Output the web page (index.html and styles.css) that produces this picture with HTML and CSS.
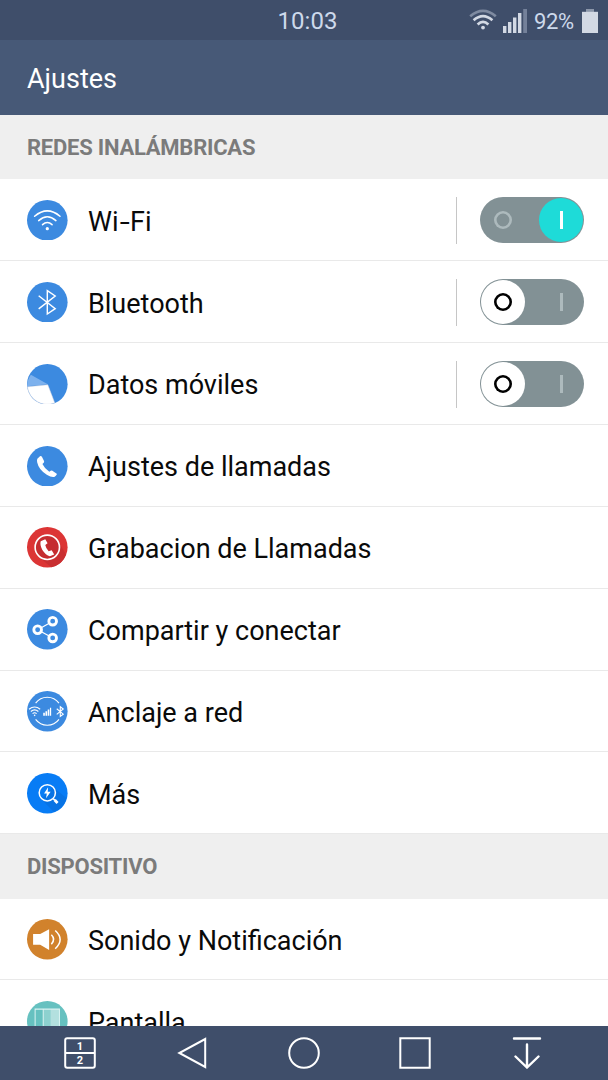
FILE: index.html
```html
<!DOCTYPE html>
<html lang="es">
<head>
    <meta charset="UTF-8">
    <meta name="viewport" content="width=device-width, initial-scale=1.0">
    <title>Ajustes</title>
    <link rel="stylesheet" href="styles.css">
</head>
<body>
    <div class="phone">
        <header class="status-bar">
            <span></span>
            <span class="clock">10:03</span>
            <div class="status-icons">
                <svg class="status-wifi" viewBox="0 0 28 21" fill="none" stroke="#d3d9e4" stroke-width="2.7">
                    <path d="M1.2 7.2Q14 -3.6 26.8 7.2" stroke="#7f8ba1" />
                    <path d="M4.6 11.3Q14 3 23.4 11.3M8.6 15.4Q14 10.4 19.4 15.4" />
                    <circle cx="14" cy="18.6" r="1.9" fill="#d3d9e4" stroke="none" />
                </svg>
                <svg class="status-signal" viewBox="0 0 24 24" fill="#d3d9e4">
                    <path d="M0 17h3.4v7H0zM5 13h3.4v11H5zM10 8.5h3.4v15.5H10zM15 4h3.4v20H15z" />
                    <path d="M20.2 0H24v24h-3.8z" fill="#74819a" />
                </svg>
                <span class="battery-text">92%</span>
                <svg class="status-battery" viewBox="0 0 16 24">
                    <path d="M4 0h8v3H4z" fill="#8c97aa" />
                    <path d="M0 2.8h16V24H0z" fill="#d3d9e4" />
                </svg>
            </div>
        </header>
        <h1 class="title-bar">Ajustes</h1>

        <main class="settings">
            <h2 class="section-title">REDES INALÁMBRICAS</h2>
            <div class="row">
                <svg class="icon" viewBox="0 0 40 40" fill="none" stroke="#fff" stroke-width="1.5" stroke-linecap="round">
                    <circle cx="20" cy="20" r="20" fill="#3c8ae0" stroke="none" />
                    <path d="M7.500 16Q20 5.500 32.500 16M11.500 20.300Q20 12.700 28.500 20.300M15.300 24.300Q20 20 24.700 24.300" />
                    <circle cx="20" cy="28.3" r="1.6" fill="#fff" stroke="none" />
                </svg>
                <span class="label">Wi<span class="wide-hyphen">-</span>Fi</span>
                <span class="switch on"><i class="mark-off"></i><i class="mark-on"></i></span>
            </div>
            <div class="row">
                <svg class="icon" viewBox="0 0 40 40" fill="none" stroke="#fff" stroke-width="1.4">
                    <circle cx="20" cy="20" r="20" fill="#3c8ae0" stroke="none" />
                    <path d="M11.5 13.5L27.8 26.3L20 31.5V8.5L27.8 13.8L11.5 26.5" />
                </svg>
                <span class="label">Bluetooth</span>
                <span class="switch"><i class="mark-off"></i><i class="mark-on"></i></span>
            </div>
            <div class="row">
                <svg class="icon" viewBox="0 0 40 40">
                    <circle cx="20" cy="20" r="20" fill="#3c8ae0" />
                    <path d="M20.5 20L0 22A20 20 0 0 1 3.8 10.5Z" fill="#7db1ed" />
                    <path d="M20.5 20.5L.4 22.5A19.7 19.7 0 0 0 27.3 38.3Z" fill="#fff" stroke="#d6d8e4" stroke-width=".5" />
                </svg>
                <span class="label">Datos móviles</span>
                <span class="switch"><i class="mark-off"></i><i class="mark-on"></i></span>
            </div>
            <div class="row">
                <svg class="icon" viewBox="0 0 40 40">
                    <circle cx="20" cy="20" r="20" fill="#3c8ae0" />
                    <path d="M10.2 12.5L12.800 10Q14 9.500 14.700 10.700L16.900 15Q17.300 16 15.200 17.800Q17.200 22.300 22 25.300Q24 23.800 25 24.300L29.300 27.300Q30 28 27.300 30.200Q24.500 31.200 19.500 28.300Q11.500 23.300 10 16Q9.600 13.500 10.200 12.500Z" fill="#fff" />
                </svg>
                <span class="label">Ajustes de llamadas</span>
            </div>
            <div class="row">
                <svg class="icon" viewBox="0 0 40 40">
                    <circle cx="20" cy="20" r="20" fill="#dc3535" />
                    <path d="M11 29L29 11L38.5 27A20 20 0 0 1 24 39.6Z" fill="#c92f31" />
                    <circle cx="20" cy="20" r="12" fill="#c52d30" stroke="#fff" stroke-width="1.6" />
                    <path d="M13.5 14L18 12L20.3 16L18 17.800Q18.800 21.500 21.300 24L24.300 22.800L26.800 27L22.500 28.800Q18.500 28 15 22.500Q12.500 17.500 13.500 14Z" fill="#fff" />
                </svg>
                <span class="label">Grabacion de Llamadas</span>
            </div>
            <div class="row">
                <svg class="icon" viewBox="0 0 40 40" fill="none" stroke="#fff">
                    <circle cx="20" cy="20" r="20" fill="#3c8ae0" stroke="none" />
                    <path d="M25.5 12L10.5 20.5L25.5 28.5" stroke-width="1.2" />
                    <g fill="#3c8ae0" stroke-width="2.8">
                        <circle cx="25.3" cy="12" r="3.8" />
                        <circle cx="10.5" cy="20.5" r="3.8" />
                        <circle cx="25.3" cy="28.5" r="3.8" />
                    </g>
                </svg>
                <span class="label">Compartir y conectar</span>
            </div>
            <div class="row">
                <svg class="icon" viewBox="0 0 40 40" fill="none" stroke="#fff" stroke-width="1.1">
                    <circle cx="20" cy="20" r="20" fill="#3c8ae0" stroke="none" />
                    <path d="M8.500 12A14.300 14.300 0 0 1 31.500 12M8.500 28A14.300 14.300 0 0 0 31.500 28" />
                    <path d="M2 18Q7.500 13.500 13 18M3.800 20.200Q7.500 17 11.200 20.200M5.500 22.300Q7.500 20.500 9.500 22.300" />
                    <circle cx="7.5" cy="24" r=".8" fill="#fff" stroke="none" />
                    <path d="M16 21.500h1.600v3H16zM18.200 20h1.600v4.500h-1.600zM20.400 18.300H22v6.200h-1.600zM22.600 16.500h1.200v8h-1.200z" fill="#fff" stroke="none" />
                    <path d="M29.300 17.500L35.700 22.800L32.800 25V15.500L35.700 17.700L29.300 23" />
                </svg>
                <span class="label">Anclaje a red</span>
            </div>
            <div class="row">
                <svg class="icon" viewBox="0 0 40 40" fill="none" stroke="#fff">
                    <circle cx="20" cy="20" r="20" fill="#087cf5" stroke="none" />
                    <path d="M14 25.500L26 14L39 25A20 20 0 0 1 26.500 38.500Z" fill="#0873e4" stroke="none" />
                    <circle cx="20" cy="19.5" r="8" stroke-width="1.5" />
                    <path d="M26 25.500l1.500 1.500" stroke-width="1.5" />
                    <path d="M27.300 26.700l2.800 2.900" stroke-width="2.8" />
                    <path d="M20.800 14L16.800 20.300H19.500L18.800 25L23.300 18.500H20.400Z" fill="#fff" stroke="none" />
                </svg>
                <span class="label">Más</span>
            </div>

            <h2 class="section-title">DISPOSITIVO</h2>
            <div class="row">
                <svg class="icon" viewBox="0 0 40 40" fill="none" stroke="#fff" stroke-width="1.5">
                    <circle cx="20" cy="20" r="20" fill="#d1822c" stroke="none" />
                    <path d="M6 14.700H13L21.800 10V30.500L13 25.300H6Z" fill="#fff" stroke="none" />
                    <path d="M24 15.500Q28.500 20 24 24.800M27.800 11.300Q37.500 20 27.800 29.300" />
                </svg>
                <span class="label">Sonido y Notificación</span>
            </div>
            <div class="row">
                <svg class="icon" viewBox="0 0 40 40">
                    <circle cx="20" cy="20" r="20" fill="#66c1c0" />
                    <path d="M16 8h7v24h-7z" fill="#8dd1cf" />
                    <path d="M23 8h9v24h-9z" fill="#b3e0df" />
                    <path d="M8 8h24v24H8zM16 8v24" fill="none" stroke="#d9f2f1" stroke-width="1" />
                </svg>
                <span class="label">Pantalla</span>
            </div>
        </main>

        <nav class="nav-bar">
            <svg viewBox="0 0 32 32" fill="none" stroke="#fff" stroke-width="2">
                <rect x="1.2" y="1.2" width="29.6" height="29.6" rx="2" />
                <path d="M1 16h30" />
                <g class="sim-number" fill="#fff" stroke="none" text-anchor="middle">
                    <text x="16" y="12.8">1</text>
                    <text x="16" y="27.3">2</text>
                </g>
            </svg>
            <svg viewBox="0 0 32 32" fill="none" stroke="#fff" stroke-width="2">
                <path d="M29.200 2V30L3.300 16Z" />
            </svg>
            <svg viewBox="0 0 32 32" fill="none" stroke="#fff" stroke-width="2">
                <circle cx="16" cy="16" r="14.8" />
            </svg>
            <svg viewBox="0 0 32 32" fill="none" stroke="#fff" stroke-width="2">
                <path d="M1.300 1.300h29.400v29.400H1.300z" />
            </svg>
            <svg viewBox="0 0 32 32" fill="none" stroke="#fff" stroke-width="2.4" stroke-linecap="round">
                <path d="M3 1.500H29M16 7.500V30.500M4.500 19.500L16 30.500L27.500 19.500" />
            </svg>
        </nav>
    </div>
</body>
</html>
```
FILE: styles.css
```css
:root {
    --bar: #3f4e6a;
    --title: #475977;
    --section: #efefef;
    --section-text: #7b7b7b;
    --divider: #e9e9e9;
    --track: #829195;
    --accent: #1edbd8;
}

* {
    box-sizing: border-box;
}

body {
    margin: 0;
    font-family: Roboto, "Liberation Sans", sans-serif;
    background-color: #fff;
    color: #0a0a0a;
}

.phone {
    display: flex;
    flex-direction: column;
    height: 1080px;
    overflow: hidden;
}

.status-bar {
    display: grid;
    grid-template-columns: 1fr auto 1fr;
    align-items: center;
    flex: none;
    height: 40px;
    padding: 2px 10px 0;
    background-color: var(--bar);
    color: #cdd9eb;
}

.clock {
    font-size: 24px;
    padding-left: 7px;
}

.status-icons {
    display: flex;
    align-items: center;
    justify-content: flex-end;
}

.status-wifi {
    width: 28px;
    height: 21px;
    margin: 0 6px 3px 0;
}

.status-signal {
    width: 24px;
    height: 24px;
    margin-right: 7px;
}

.battery-text {
    width: 41px;
    margin-right: 7px;
    font-size: 22px;
    letter-spacing: -0.4px;
    white-space: nowrap;
}

.status-battery {
    width: 16px;
    height: 24px;
    margin-bottom: 1px;
}

.title-bar {
    flex: none;
    height: 75px;
    margin: 0;
    padding: 3px 27px 0;
    background-color: var(--title);
    color: #fff;
    font-size: 27px;
    font-weight: 400;
    line-height: 72px;
}

.settings {
    flex: 1;
    min-height: 0;
    overflow: hidden;
}

.section-title {
    height: 64.2px;
    margin: 0;
    padding: 1px 27px 0;
    background-color: var(--section);
    color: var(--section-text);
    font-size: 22px;
    font-weight: 700;
    letter-spacing: -0.24px;
    line-height: 64px;
}

.row {
    display: flex;
    align-items: center;
    height: 81.9px;
    padding: 1px 24px 0 27px;
    border-bottom: 1px solid var(--divider);
}

.icon {
    flex: none;
    width: 40.6px;
    height: 40.6px;
    margin-right: 20.4px;
}

.label {
    flex: 1;
    padding-top: 3px;
    font-size: 27px;
    white-space: nowrap;
}

.wide-hyphen {
    display: inline-block;
    margin: 0 2px;
    transform: scaleX(1.35);
}

.switch {
    display: flex;
    align-items: center;
    justify-content: space-between;
    position: relative;
    width: 104.5px;
    height: 46.5px;
    padding: 0 1px;
    border-radius: 24px;
    background-color: var(--track);
}

.switch::before {
    content: "";
    position: absolute;
    left: -24px;
    top: 0;
    width: 1px;
    height: 47px;
    background-color: #c6c6c6;
}

.mark-off,
.mark-on {
    display: grid;
    place-items: center;
    width: 44px;
    height: 44px;
    border-radius: 50%;
    color: #adbabd;
}

.mark-off::before {
    content: "";
    width: 18px;
    height: 18px;
    box-shadow: inset 0 0 0 2.6px currentColor;
    border-radius: 50%;
}

.mark-on::before {
    content: "";
    width: 3px;
    height: 18px;
    background-color: currentColor;
}

.switch:not(.on) .mark-off {
    background-color: #fff;
    color: #000;
}

.switch.on .mark-on {
    background-color: var(--accent);
    color: #fff;
}

.nav-bar {
    display: flex;
    flex: none;
    align-items: center;
    justify-content: space-between;
    height: 54px;
    padding: 0 65px 0 64px;
    background-color: var(--bar);
}

.nav-bar svg {
    width: 32px;
    height: 32px;
}

.sim-number {
    font-size: 11px;
    font-weight: 700;
}
```
